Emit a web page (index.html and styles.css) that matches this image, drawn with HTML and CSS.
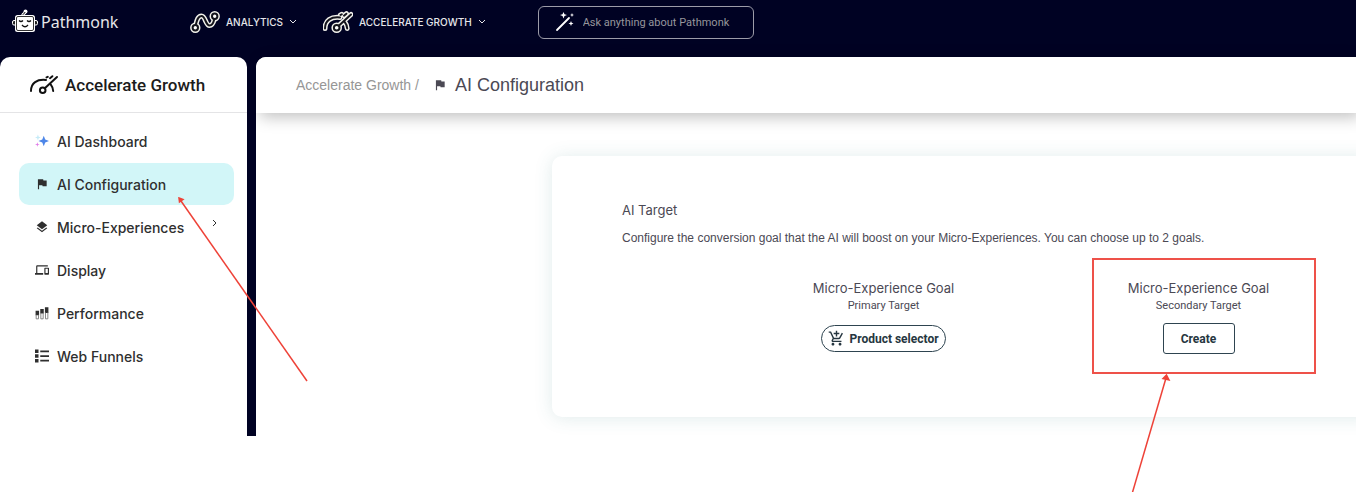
FILE: index.html
```
<!DOCTYPE html>
<html lang="en">
<head>
  <meta charset="UTF-8">
  <meta name="viewport" content="width=device-width, initial-scale=1.0">
  <title>Pathmonk - AI Configuration</title>
  <link rel="stylesheet" href="styles.css">
</head>
<body>
  <!-- shared icon shapes -->
  <svg class="sprite" aria-hidden="true">
    <symbol id="gauge" viewBox="-1 -2 30 23">
      <path d="M1 16C1 8 7 4 16 5"/>
      <circle cx="12.7" cy="15.3" r="2.8" fill="#fff"/>
      <path d="M14.8 13.2L27 2M16.5 2.4l1.3-.6M20 3.2l2.400-2M20.800 9.600c1.600 2 2.300 4 2.400 6.400"/>
    </symbol>
    <symbol id="route" viewBox="-1 -1 30 24">
      <path d="M5 13C6 9 7 5 10.500 5c4 0 4 9.500 8 9.500 3 0 4-3 4.700-6"/>
      <circle cx="4.3" cy="16.7" r="2.7" fill="#fff"/>
      <circle cx="23.7" cy="5.3" r="2.7" fill="#fff"/>
    </symbol>
    <symbol id="flag" viewBox="0 0 24 24">
      <path d="M14.400 6L14 4H5v17h2v-7h5.600l.4 2h7V6z"/>
    </symbol>
  </svg>

  <header class="topbar">
    <a href="#" class="logo">
      <svg width="26" height="26" viewBox="0 0 26 26" aria-hidden="true">
        <path d="M11 7c-1-3 2-1.500 2-4" fill="none" stroke="#fff" stroke-width="3"/>
        <circle cx="13.500" cy="2.500" r="2" fill="#fff"/>
        <path d="M11 7c-1-3 2-1.500 2-4" fill="none" stroke="#111" stroke-width="1"/>
        <rect x="0.500" y="11.500" width="4" height="4.500" rx="1.500" fill="#222" stroke="#fff"/>
        <rect x="21.500" y="11.500" width="4" height="4.500" rx="1.500" fill="#222" stroke="#fff"/>
        <rect x="3" y="6" width="20" height="17" rx="2.500" fill="#fff"/>
        <rect x="4.500" y="7.500" width="17" height="14" rx="1.500" fill="#fff" stroke="#333" stroke-width="1"/>
        <path d="M7 11.500q2 2 4 0M15 11.500q2 2 4 0M10 16q3 3.500 6 0" fill="none" stroke="#111" stroke-width="1.300"/>
      </svg>
      <span>Pathmonk</span>
    </a>
    <nav class="menu">
      <button type="button" class="menu-item">
        <svg class="menu-icon" aria-hidden="true"><use href="#route" class="halo"/><use href="#route" class="line"/></svg>
        Analytics
        <svg class="chevron" width="8" height="6" viewBox="0 0 8 6" aria-hidden="true"><path d="M1 1l3 3 3-3"/></svg>
      </button>
      <button type="button" class="menu-item">
        <svg class="menu-icon" aria-hidden="true"><use href="#gauge" class="halo"/><use href="#gauge" class="line"/></svg>
        Accelerate Growth
        <svg class="chevron" width="8" height="6" viewBox="0 0 8 6" aria-hidden="true"><path d="M1 1l3 3 3-3"/></svg>
      </button>
    </nav>
    <label class="search">
      <svg width="20" height="20" viewBox="0 0 20 20" aria-hidden="true">
        <path d="M2 18L14 6" stroke="#fff" stroke-width="1.800" stroke-linecap="round"/>
        <path d="M8.500 0l1 2.200 2.500.8-2.500 1-1 2.500-1-2.500L5 3l2.500-.8zM17 1l.6 1.400L19 3l-1.400.6L17 5l-.6-1.400L15 3l1.400-.6zM16 9l.7 1.800 1.800.7-1.800.7L16 14l-.7-1.800-1.800-.7 1.800-.7z" fill="#fff"/>
      </svg>
      <input type="text" placeholder="Ask anything about Pathmonk" aria-label="Ask anything about Pathmonk">
    </label>
  </header>

  <div class="layout">
    <aside class="sidebar">
      <h2 class="sidebar-title">
        <svg class="title-icon" aria-hidden="true"><use href="#gauge"/></svg>
        Accelerate Growth
      </h2>
      <ul class="side-nav">
        <li>
          <a href="#">
            <svg class="icon" viewBox="0 0 24 24" aria-hidden="true">
              <path d="M15 3l2.500 6.500L24 12l-6.500 2.500L15 21l-2.500-6.500L6 12l6.500-2.500z" fill="#4d86e8"/>
              <path d="M5 1l1.300 3.700L10 6 6.300 7.300 5 11 3.700 7.300 0 6l3.700-1.300z" fill="#c5ebf8"/>
              <path d="M4 14l1 3 3 1-3 1-1 3-1-3-3-1 3-1z" fill="#e07be8"/>
            </svg>
            AI Dashboard
          </a>
        </li>
        <li class="active">
          <a href="#">
            <svg class="icon" aria-hidden="true"><use href="#flag"/></svg>
            AI Configuration
          </a>
          <svg class="arrow arrow-menu" width="131" height="186" viewBox="0 0 131 186" aria-hidden="true">
            <path d="M3 4L129 184"/>
            <path class="head" d="M1 1l4 1.500L1.500 5z"/>
          </svg>
        </li>
        <li>
          <a href="#">
            <svg class="icon" viewBox="0 0 24 24" aria-hidden="true">
              <path d="M12 18.500l-7.400-5.700L3 14.100l9 7 9-7-1.600-1.300zM12 16l7.400-5.700L21 9l-9-7-9 7 1.600 1.300z"/>
            </svg>
            Micro-Experiences
            <svg class="expand" width="6" height="8" viewBox="0 0 6 8" aria-hidden="true"><path d="M1 1l3 3-3 3"/></svg>
          </a>
        </li>
        <li>
          <a href="#">
            <svg class="icon" viewBox="0 0 24 24" aria-hidden="true">
              <path d="M4 6h18V4H4c-1.100 0-2 .9-2 2v11H0v3h14v-3H4V6zm19 2h-6c-.6 0-1 .4-1 1v10c0 .6.4 1 1 1h6c.6 0 1-.4 1-1V9c0-.6-.4-1-1-1zm-1 9h-4v-7h4v7z"/>
            </svg>
            Display
          </a>
        </li>
        <li>
          <a href="#">
            <svg class="icon" viewBox="0 0 24 24" aria-hidden="true">
              <path d="M1 8h6v8H1zM9 5h6v8H9zM17 2h6v10h-6z"/>
              <path d="M2 15v7h4v-7M10 12v10h4V12M18 11v11h4V11" fill="none" stroke="#777" stroke-width="1.500"/>
            </svg>
            Performance
          </a>
        </li>
        <li>
          <a href="#">
            <svg class="icon" viewBox="0 0 24 24" aria-hidden="true">
              <path d="M0 1h6v6H0zM0 9h6v6H0zM0 17h6v6H0zM9 2.500h15v3H9zM9 10.500h15v3H9zM9 18.500h15v3H9z"/>
            </svg>
            Web Funnels
          </a>
        </li>
      </ul>
    </aside>

    <main class="content">
      <div class="page-head">
        <a href="#" class="crumb">Accelerate Growth /</a>
        <svg class="icon" aria-hidden="true"><use href="#flag"/></svg>
        <h1>AI Configuration</h1>
      </div>

      <section class="card">
        <h2>AI Target</h2>
        <p>Configure the conversion goal that the AI will boost on your Micro-Experiences. You can choose up to 2 goals.</p>
        <div class="goals">
          <div class="goal">
            <h3>Micro-Experience Goal</h3>
            <small>Primary Target</small>
            <div class="goal-action">
              <button type="button" class="btn btn-pill">
                <svg width="17" height="17" viewBox="0 0 24 24" aria-hidden="true">
                  <path d="M11 9h2V6h3V4h-3V1h-2v3H8v2h3v3zm-4 9c-1.100 0-2 .9-2 2s.9 2 2 2 2-.9 2-2-.9-2-2-2zm10 0c-1.100 0-2 .9-2 2s.9 2 2 2 2-.9 2-2-.9-2-2-2zm-9.830-3.250l.03-.12.9-1.630h7.450c.75 0 1.410-.41 1.750-1.030l3.860-7.010L19.420 4h-.01l-1.100 2-2.760 5H8.530l-.13-.27L6.160 6l-.95-2-.94-2H1v2h2l3.600 7.590-1.350 2.450c-.16.28-.25.61-.25.96 0 1.100.9 2 2 2h12v-2H7.420c-.13 0-.25-.11-.25-.25z"/>
                </svg>
                Product selector
              </button>
            </div>
          </div>
          <div class="goal">
            <h3>Micro-Experience Goal</h3>
            <small>Secondary Target</small>
            <div class="goal-action">
              <button type="button" class="btn btn-create">Create</button>
            </div>
            <div class="highlight">
              <svg class="arrow arrow-goal" width="42" height="120" viewBox="0 0 42 120" aria-hidden="true">
                <path d="M36 4L2 120"/>
                <path class="head" d="M36.500 1l2.500 5-6-1.500z"/>
              </svg>
            </div>
          </div>
        </div>
      </section>
    </main>
  </div>
</body>
</html>
```
FILE: styles.css
```
* {
  box-sizing: border-box;
}

body {
  margin: 0;
  min-height: 100vh;
  font-family: Inter, "Liberation Sans", sans-serif;
  background: #fff;
  color: #2f2f2f;
  overflow-x: hidden;
}

h1, h2, h3, p, ul {
  margin: 0;
  padding: 0;
  font-weight: 400;
}

a {
  color: inherit;
  text-decoration: none;
}

button {
  font-family: inherit;
  cursor: pointer;
}

svg {
  flex-shrink: 0;
}

.sprite {
  position: absolute;
  width: 0;
  height: 0;
}

/* top bar */
.topbar {
  display: flex;
  align-items: center;
  height: 57px;
  padding: 0 12px 13px;
  background: #000223;
  color: #e6e6ea;
}

.logo {
  display: flex;
  align-items: center;
  gap: 3px;
  width: 178px;
  font-family: "Noto Sans", sans-serif;
  font-size: 16px;
}

.menu {
  display: flex;
  gap: 26px;
}

.menu-item {
  display: flex;
  align-items: center;
  gap: 6px;
  padding: 0;
  border: none;
  background: none;
  color: #e6e6ea;
  font-size: 10px;
  font-weight: 500;
  text-transform: uppercase;
}

.menu-icon {
  width: 30px;
  height: 24px;
  fill: none;
  stroke-linecap: round;
}

.halo {
  stroke: #f2f2ec;
  stroke-width: 5;
}

.line {
  stroke: #14141c;
  stroke-width: 2;
}

.chevron,
.expand {
  fill: none;
  stroke: currentColor;
}

.search {
  display: flex;
  align-items: center;
  gap: 8px;
  width: 216px;
  height: 33px;
  margin-left: 52px;
  padding: 0 16px;
  border: 1px solid #9c9ca8;
  border-radius: 6px;
}

.search input {
  flex: 1;
  min-width: 0;
  padding: 0;
  border: none;
  outline: none;
  background: none;
  color: #fff;
  font-family: Roboto, sans-serif;
  font-size: 11px;
}

.search input::placeholder {
  color: #96969c;
}

/* sidebar + content */
.layout {
  display: flex;
  gap: 9px;
  background: #000223;
}

.sidebar {
  position: relative;
  z-index: 1;
  width: 247px;
  flex-shrink: 0;
  background: #fff;
  border-radius: 10px 10px 0 0;
}

.sidebar-title {
  display: flex;
  align-items: center;
  gap: 6px;
  height: 56px;
  padding-left: 29px;
  border-bottom: 1px solid #e4e4e6;
  color: #1c1c1c;
  font-family: Roboto, sans-serif;
  font-size: 17px;
  font-weight: 500;
}

.title-icon {
  width: 30px;
  height: 23px;
  fill: none;
  stroke: #111;
  stroke-width: 2;
  stroke-linecap: round;
}

.side-nav {
  display: flex;
  flex-direction: column;
  gap: 1px;
  padding: 7px 13px 0 19px;
  list-style: none;
}

.side-nav li {
  position: relative;
}

.side-nav a {
  display: flex;
  align-items: center;
  gap: 8px;
  height: 42px;
  padding: 0 16px;
  border-radius: 10px;
  font-size: 14px;
  font-weight: 500;
}

.side-nav .active a {
  background: #d2f6f8;
}

.icon {
  width: 14px;
  height: 14px;
  fill: currentColor;
}

.expand {
  margin: 0 0 8px auto;
}

.content {
  flex: 1;
  min-width: 0;
  padding-bottom: 19px;
  background: #fff;
  border-radius: 10px 0 0 0;
}

.page-head {
  display: flex;
  align-items: center;
  height: 56px;
  padding-left: 40px;
  background: #fff;
  border-radius: 10px 0 0 0;
  box-shadow: 4px 4px 16px rgba(0, 0, 0, 0.25);
  color: #4b4954;
  font-family: "Liberation Sans", sans-serif;
}

.page-head .icon {
  margin: 0 8px 0 14px;
}

.crumb {
  color: #969696;
  font-size: 14px;
}

h1 {
  font-size: 18px;
}

/* the card runs off the right edge of the window */
.card {
  margin: 43px -20px 0 296px;
  padding: 42px 20px 63px 70px;
  background: #fff;
  border-radius: 10px;
  box-shadow: 0 1px 18px rgba(60, 130, 130, 0.16);
  color: #4b4954;
}

.card h2 {
  font-size: 13px;
  line-height: 24px;
}

.card p {
  margin-top: 4px;
  font-family: "Liberation Sans", sans-serif;
  font-size: 12px;
  line-height: 24px;
}

.goals {
  display: grid;
  grid-template-columns: 1fr 1fr;
  margin-top: 28px;
  padding-left: 104px;
}

.goal {
  position: relative;
  text-align: center;
}

.goal h3 {
  font-size: 13px;
  line-height: 20px;
}

.goal small {
  display: block;
  font-family: Roboto, sans-serif;
  font-size: 11px;
  line-height: 16px;
}

.goal-action {
  display: flex;
  align-items: center;
  justify-content: center;
  height: 31px;
  margin-top: 9px;
}

.btn {
  border: 1px solid #2e4450;
  background: #fff;
  color: #263640;
  font-family: Roboto, sans-serif;
  font-size: 12px;
  font-weight: 700;
}

.btn-pill {
  display: flex;
  align-items: center;
  gap: 4px;
  height: 27px;
  padding: 0 6px;
  border-radius: 14px;
}

.btn-pill svg {
  fill: currentColor;
}

.btn-create {
  width: 72px;
  height: 31px;
  padding: 0;
  border-radius: 3px;
}

/* red callouts lying over the page */
.highlight {
  position: absolute;
  top: -20px;
  left: 51px;
  width: 224px;
  height: 116px;
  border: 2px solid #ee5149;
  pointer-events: none;
}

.arrow {
  position: absolute;
  z-index: 2;
  fill: none;
  stroke: #ee4238;
  stroke-width: 1.5;
  pointer-events: none;
}

.arrow .head {
  fill: #ee4238;
}

.arrow-menu {
  top: 34px;
  left: 159px;
}

.arrow-goal {
  top: 114px;
  left: 36px;
}
```
